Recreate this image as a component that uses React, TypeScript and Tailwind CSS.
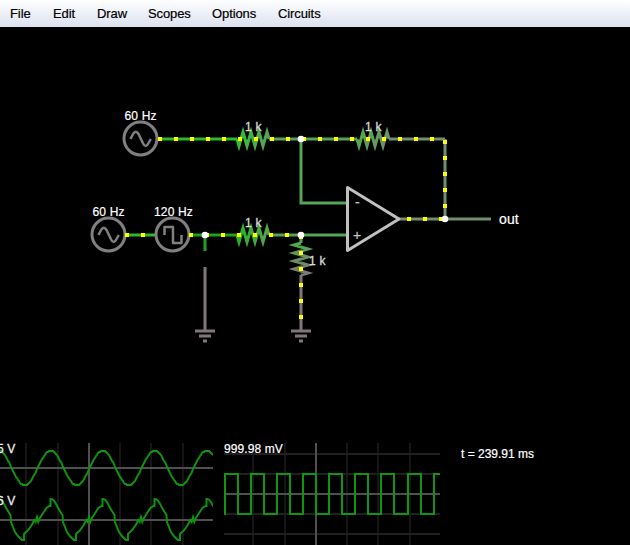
import React from "react";

const MENU = [
  { label: "File", width: "w-[43px]" },
  { label: "Edit", width: "w-[44px]" },
  { label: "Draw", width: "w-[51px]" },
  { label: "Scopes", width: "w-[64px]" },
  { label: "Options", width: "w-[66px]" },
  { label: "Circuits", width: "w-[60px]" },
];

const GREY = "#807878";
const OUT = "#709070";
const MID = "#57a357";

type Pt = [number, number];

const toPoints = (pts: Pt[]) => pts.map((p) => p.join(",")).join(" ");

function Wire({ pts, color }: { pts: Pt[]; color: string }) {
  return <polyline points={toPoints(pts)} fill="none" stroke={color} strokeWidth={3} />;
}

// Zigzag of sixteen 2px segments running right, or down when vertical.
function Resistor({ x, y, from, to, id, vertical }: { x: number; y: number; from: string; to: string; id: string; vertical?: boolean }) {
  const offsets = [0, 7, 0, -7];
  const pts: Pt[] = Array.from({ length: 17 }, (_, i): Pt => {
    const o = offsets[i % 4];
    return vertical ? [x - o, y + i * 2] : [x + i * 2, y + o];
  });
  return (
    <g>
      <linearGradient id={id} gradientUnits="userSpaceOnUse" x1={x} y1={y} x2={vertical ? x : x + 32} y2={vertical ? y + 32 : y}>
        <stop offset="0" stopColor={from} />
        <stop offset="1" stopColor={to} />
      </linearGradient>
      <polyline points={toPoints(pts)} fill="none" stroke={`url(#${id})`} strokeWidth={3} strokeMiterlimit={10} />
    </g>
  );
}

function Source({ cx, cy, d }: { cx: number; cy: number; d: string }) {
  return (
    <g fill="none" stroke="#808080" transform={`translate(${cx} ${cy})`}>
      <circle r={16.5} strokeWidth={3} fill="#000" />
      <path d={d} strokeWidth={2.5} strokeLinejoin="round" />
    </g>
  );
}

const SINE = "M-10 .5 L-7.5 -4.5 Q-4.8 -9.2 -2 -4.5 L2.6 5 Q5.2 10 7.8 5 L10.3 .5";
const SQUARE = "M-8 .5 V-7.5 H.5 V8.5 H9 V.5";

function Ground({ x }: { x: number }) {
  return (
    <path d={`M${x - 10} 331 H${x + 10} M${x - 6} 336 H${x + 6} M${x - 2} 341 H${x + 2}`} stroke={GREY} strokeWidth={3} />
  );
}

const DOTS: Pt[] = [
  ...[160, 176, 192, 208, 224, 240, 256, 272, 288, 304, 320, 336, 352, 368, 384, 400, 416, 432].map((x): Pt => [x, 139]),
  ...[142, 158, 174, 190, 206].map((y): Pt => [445, y]),
  ...[409, 425, 441].map((x): Pt => [x, 219]),
  ...[127, 143, 191, 207, 223, 239, 255, 271, 287].map((x): Pt => [x, 235]),
  ...[237, 253, 269, 285, 301, 317].map((y): Pt => [301, y]),
];

const NODES: Pt[] = [[301, 139], [205, 235], [301, 235], [445, 219]];

function Circuit() {
  return (
    <svg className="block h-[416px] w-[630px]" viewBox="0 27 630 416">
      <Wire pts={[[158, 139], [237, 139]]} color="#30b830" />
      <Resistor id="r1" x={237} y={139} from="#30c030" to={MID} />
      <Wire pts={[[269, 139], [357, 139]]} color={MID} />
      <Resistor id="r2" x={357} y={139} from="#50a850" to={OUT} />
      <Wire pts={[[389, 139], [445, 139]]} color={OUT} />
      <Wire pts={[[445, 139], [445, 219]]} color={OUT} />
      <Wire pts={[[399, 219], [491, 219]]} color={OUT} />
      <Wire pts={[[301, 139], [301, 203], [347, 203]]} color={MID} />
      <Wire pts={[[126, 235], [156, 235]]} color="#30b830" />
      <Wire pts={[[190, 235], [237, 235]]} color="#20a020" />
      <Wire pts={[[205, 235], [205, 251]]} color="#20a020" />
      <Resistor id="r3" x={237} y={235} from="#20b820" to={MID} />
      <Wire pts={[[269, 235], [347, 235]]} color={MID} />
      <Wire pts={[[301, 235], [301, 243]]} color={MID} />
      <Resistor id="r4" x={301} y={243} from="#50a850" to={GREY} vertical />
      <Wire pts={[[301, 275], [301, 331]]} color={GREY} />
      <Wire pts={[[205, 267], [205, 331]]} color={GREY} />
      <Ground x={205} />
      <Ground x={301} />
      <Source cx={140.5} cy={138.5} d={SINE} />
      <Source cx={108.5} cy={234.5} d={SINE} />
      <Source cx={172.5} cy={234.5} d={SQUARE} />
      <path d="M347.5 187.5 L399 219 L347.5 250.5 Z" fill="none" stroke="#c0c0c0" strokeWidth={3} strokeLinejoin="round" />
      {DOTS.map(([x, y]) => (
        <rect key={`${x}-${y}`} x={x - 2} y={y - 2} width={4} height={4} fill="#ffff00" />
      ))}
      {NODES.map(([x, y]) => (
        <circle key={`${x}-${y}`} cx={x} cy={y} r={3.3} fill="#fff" />
      ))}
      <g fontSize={12} fill="#fff" stroke="#fff" strokeWidth={0.2} letterSpacing={0.15}>
        <text x={124.5} y={120}>60 Hz</text>
        <text x={92.5} y={216}>60 Hz</text>
        <text x={154} y={216}>120 Hz</text>
        <text x={499} y={224} fontSize={14}>out</text>
      </g>
      <g fontSize={12} fill="#dcdcdc" stroke="#dcdcdc" strokeWidth={0.3} letterSpacing={0.2}>
        <text x={245} y={131}>1 k</text>
        <text x={365} y={131}>1 k</text>
        <text x={245} y={227}>1 k</text>
        <text x={309} y={265}>1 k</text>
      </g>
      <g fontSize={14} fill="#c8c8c8" stroke="#c8c8c8" strokeWidth={0.2}>
        <text x={355} y={207}>-</text>
        <text x={353} y={240}>+</text>
      </g>
    </svg>
  );
}

const sinePts: Pt[] = Array.from({ length: 214 }, (_, x): Pt => [
  x,
  Math.round(468 + 17.3 * Math.cos(((x - 24.7) * 2 * Math.PI) / 52)),
]);

const SUM_CYCLE: Pt[] = [
  [0.5, 506], [0.5, 499], [3, 499.5], [5.5, 503], [9, 509.5], [12.5, 515], [13, 522], [17, 532], [20.3, 536.5],
  [24, 540], [26, 540], [26, 534], [30.3, 530], [33.7, 525], [36.3, 520], [37.7, 522], [39, 517], [40.3, 522],
  [42, 518], [45.3, 512.7], [48.7, 507.7], [51.5, 506],
];
const sumPts = [-2, 50, 102, 154, 206].flatMap((s) => SUM_CYCLE.map(([x, y]): Pt => [s + x, y]));

const EDGES = [225, 238, 251, 264, 277, 290, 303, 316, 329, 342, 355, 368, 381, 394, 408, 421, 434];
const squarePath = "M225 515" + EDGES.map((x, i) => `H${x} V${i % 2 === 0 ? 474 : 514}`).join(" ") + " H440";

const TRACE = "#0f960f";

function LeftScope({ top, mid, base, label, pts }: { top: number; mid: number; base: number; label: string; pts: Pt[] }) {
  return (
    <svg className="block h-[51px] w-[213px]" viewBox={`0 ${top} 213 51`}>
      <path d={[26, 58, 120, 151, 183].map((x) => `M${x} ${top} V${top + 51}`).join(" ")} stroke="#151515" strokeWidth={2} />
      <path d={`M0 ${mid} H213 M89 ${top} V${top + 51}`} stroke="#505050" strokeWidth={2} />
      <polyline points={toPoints(pts)} fill="none" stroke={TRACE} strokeWidth={1.9} />
      <text x={-3} y={base} fontSize={12} fill="#ececec" stroke="#ececec" strokeWidth={0.3} letterSpacing={0.15}>{label}</text>
    </svg>
  );
}

export default function App() {
  return (
    <div className="flex h-[545px] w-[630px] flex-col overflow-hidden bg-black font-['Liberation_Sans',Arial,sans-serif]">
      <nav className="flex h-[27px] shrink-0 items-center bg-linear-to-b from-white to-[#dce1ef] pl-[10px] text-[13px] tracking-[-0.1px] text-black [-webkit-text-stroke:0.2px_black]">
        {MENU.map((m) => (
          <button key={m.label} className={`${m.width} shrink-0 text-left`}>{m.label}</button>
        ))}
      </nav>
      <main className="shrink-0">
        <Circuit />
      </main>
      <section className="flex h-[102px] shrink-0">
        <div className="flex w-[224px] flex-col">
          <LeftScope top={443} mid={468} base={453} label="5 V" pts={sinePts} />
          <LeftScope top={494} mid={520} base={505} label="6 V" pts={sumPts} />
        </div>
        <svg className="block h-[102px] w-[216px]" viewBox="224 443 216 102">
          <path d="M253 443 V545 M285 443 V545 M347 443 V545 M378 443 V545 M410 443 V545" stroke="#151515" strokeWidth={2} />
          <path d="M224 454 H440 M224 474 H440 M224 514 H440 M224 534 H440" stroke="#202020" strokeWidth={2} />
          <path d="M224 494 H440 M316 443 V545" stroke="#505050" strokeWidth={2} />
          <path d={squarePath} fill="none" stroke={TRACE} strokeWidth={2} />
          <text x={224} y={453} fontSize={12} fill="#fff" stroke="#fff" strokeWidth={0.2} letterSpacing={0.1}>999.98 mV</text>
        </svg>
        <p className="pl-[21px] pt-[3px] text-[12px] leading-4 whitespace-pre text-white [-webkit-text-stroke:0.2px_white]">t = 239.91 ms</p>
      </section>
    </div>
  );
}
